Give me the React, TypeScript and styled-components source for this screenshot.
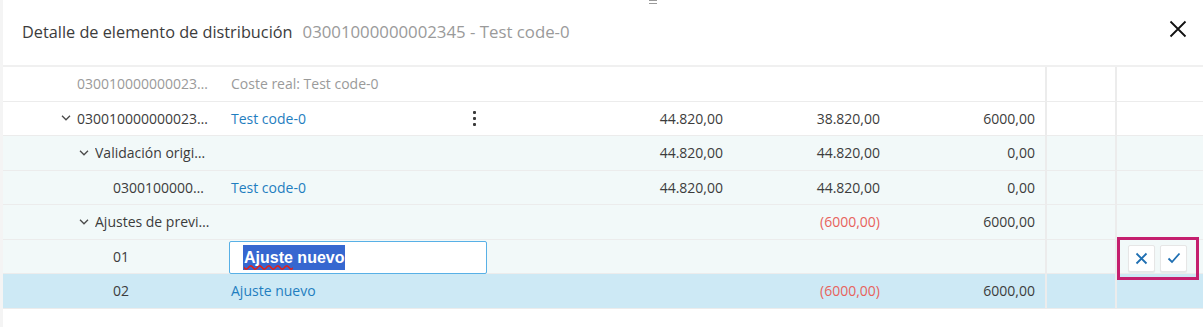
import React from "react";
import styled, { createGlobalStyle } from "styled-components";

const GlobalStyle = createGlobalStyle`
  html, body { margin: 0; padding: 0; background: #ffffff; }
  body { font-family: "Open Sans", "Noto Sans", sans-serif; color: #3c3c3c; }
  * { box-sizing: border-box; }
`;

const Page = styled.div`
  position: relative;
  width: 1203px;
  height: 327px;
  overflow: hidden;
  border-left: 3px solid #f4f4f4;
  background: #ffffff;
`;

const Handle = styled.div`
  position: absolute;
  top: 0;
  left: 646px;
  width: 8px;
  display: flex;
  flex-direction: column;
  gap: 2px;
  span {
    display: block;
    height: 1px;
    background: #9a9a9a;
  }
`;

const Header = styled.div`
  display: flex;
  align-items: center;
  height: 67px;
  padding: 0 19px 2px 19px;
  border-bottom: 2px solid #f0f0f0;
`;

const Title = styled.span`
  font-size: 16.3px;
  color: #3c3c3c;
  white-space: nowrap;
`;

const Subtitle = styled.span`
  font-size: 16.8px;
  color: #9a9a9a;
  margin-left: 10px;
  white-space: nowrap;
`;

const CloseButton = styled.button`
  margin-left: auto;
  margin-top: -6px;
  margin-right: -4px;
  border: none;
  background: transparent;
  padding: 0;
  width: 20px;
  height: 20px;
  display: flex;
  align-items: center;
  justify-content: center;
`;

const Table = styled.div`
  display: flex;
  flex-direction: column;
`;

type Variant = "plain" | "group" | "selected";

const rowBg: Record<Variant, string> = {
  plain: "#ffffff",
  group: "#f2f9f9",
  selected: "#cde9f5",
};

const Row = styled.div<{ $variant: Variant }>`
  display: grid;
  grid-template-columns: 212px 275px 245px 156px 154px 72px 84px;
  height: 34.5px;
  border-bottom: 1px solid #ececec;
  background: ${(p) => rowBg[p.$variant]};
  font-size: 14px;
`;

const TreeCell = styled.div<{ $level: number; $muted?: boolean }>`
  display: flex;
  align-items: center;
  min-width: 0;
  padding-left: ${(p) => 57 + p.$level * 18}px;
  padding-right: ${(p) => 3 + p.$level * 2}px;
  color: ${(p) => (p.$muted ? "#9a9a9a" : "#3c3c3c")};
`;

const ChevronSlot = styled.span`
  flex: 0 0 17px;
  display: flex;
  align-items: center;
  padding-left: 1px;
`;

const Truncate = styled.span`
  overflow: hidden;
  white-space: nowrap;
  text-overflow: ellipsis;
  min-width: 0;
`;

const NameCell = styled.div<{ $tone?: "link" | "muted" }>`
  display: flex;
  align-items: center;
  padding-left: 16px;
  padding-right: 14px;
  color: ${(p) => (p.$tone === "muted" ? "#9a9a9a" : "#1f7ec0")};
  white-space: nowrap;
`;

const Kebab = styled.span`
  margin-left: auto;
  display: flex;
  flex-direction: column;
  gap: 3px;
  span {
    width: 3px;
    height: 3px;
    background: #3a3a3a;
    border-radius: 1px;
  }
`;

const NumCell = styled.div<{ $negative?: boolean; $pad: number }>`
  display: flex;
  align-items: center;
  justify-content: flex-end;
  padding-right: ${(p) => p.$pad}px;
  color: ${(p) => (p.$negative ? "#e8625c" : "#3c3c3c")};
  white-space: nowrap;
`;

const DividerCell = styled.div`
  border-left: 2px solid #ececec;
  border-right: 2px solid #ececec;
`;

const ActionCell = styled.div`
  position: relative;
`;

const InputCell = styled.div`
  display: flex;
  align-items: center;
  padding-left: 14px;
  padding-right: 3px;
`;

const FakeInput = styled.div`
  width: 258px;
  height: 33px;
  border: 1px solid #58b0e6;
  border-radius: 2px;
  background: #ffffff;
  display: flex;
  align-items: center;
  padding-left: 13px;
  margin-top: 1px;
`;

const Selected = styled.span`
  font-family: "Liberation Sans", Arial, sans-serif;
  font-weight: bold;
  font-size: 16px;
  line-height: 25px;
  color: #ffffff;
  background: #3667d0;
  padding: 0 1px;
`;

const Misspelled = styled.span`
  text-decoration: underline wavy #e0201c;
  text-decoration-skip-ink: none;
  text-underline-offset: 2px;
`;

const ActionBox = styled.div`
  position: absolute;
  left: 0;
  top: -3px;
  width: 82px;
  height: 43px;
  border: 3px solid #c41f6e;
  display: flex;
  align-items: center;
  gap: 5px;
  padding-left: 8px;
  background: transparent;
  z-index: 2;
`;

const IconButton = styled.button`
  width: 27px;
  height: 27px;
  padding: 0;
  border: 1px solid #e6e6e6;
  border-radius: 2px;
  background: #ffffff;
  box-shadow: 0 1px 1px rgba(0, 0, 0, 0.06);
  display: flex;
  align-items: center;
  justify-content: center;
`;

const Chevron = () => (
  <svg width="10" height="6" viewBox="0 0 10 6">
    <path d="M1 0.8 L5 4.8 L9 0.8" fill="none" stroke="#4a4a4a" strokeWidth="1.3" />
  </svg>
);

const CloseIcon = () => (
  <svg width="18" height="18" viewBox="0 0 18 18">
    <path d="M1.5 1.5 L16.5 16.5 M16.5 1.5 L1.5 16.5" stroke="#111" strokeWidth="1.8" />
  </svg>
);

const XIcon = () => (
  <svg width="13" height="13" viewBox="0 0 13 13">
    <path d="M1.5 1.5 L11.5 11.5 M11.5 1.5 L1.5 11.5" stroke="#1f6fb2" strokeWidth="1.8" />
  </svg>
);

const CheckIcon = () => (
  <svg width="14" height="12" viewBox="0 0 14 12">
    <path d="M1.5 6.5 L5 10 L12.5 1.5" fill="none" stroke="#1f6fb2" strokeWidth="1.8" />
  </svg>
);

type RowData = {
  variant: Variant;
  level: number;
  chevron?: boolean;
  code: string;
  codeMuted?: boolean;
  name?: string;
  nameTone?: "link" | "muted";
  kebab?: boolean;
  input?: boolean;
  a?: string;
  b?: string;
  bNeg?: boolean;
  c?: string;
  actions?: boolean;
};

const rows: RowData[] = [
  { variant: "plain", level: 0, code: "030010000000023456", codeMuted: true, name: "Coste real: Test code-0", nameTone: "muted" },
  { variant: "plain", level: 0, chevron: true, code: "030010000000023456", name: "Test code-0", kebab: true, a: "44.820,00", b: "38.820,00", c: "6000,00" },
  { variant: "group", level: 1, chevron: true, code: "Validación original", a: "44.820,00", b: "44.820,00", c: "0,00" },
  { variant: "group", level: 2, code: "03001000000023", name: "Test code-0", a: "44.820,00", b: "44.820,00", c: "0,00" },
  { variant: "group", level: 1, chevron: true, code: "Ajustes de previsión", b: "(6000,00)", bNeg: true, c: "6000,00" },
  { variant: "group", level: 2, code: "01", input: true, actions: true },
  { variant: "selected", level: 2, code: "02", name: "Ajuste nuevo", b: "(6000,00)", bNeg: true, c: "6000,00" },
];

export default function App() {
  return (
    <>
      <GlobalStyle />
      <Page>
        <Handle>
          <span />
          <span />
        </Handle>
        <Header>
          <Title>Detalle de elemento de distribución</Title>
          <Subtitle>03001000000002345 - Test code-0</Subtitle>
          <CloseButton aria-label="Cerrar">
            <CloseIcon />
          </CloseButton>
        </Header>
        <Table>
          {rows.map((r, i) => (
            <Row key={i} $variant={r.variant}>
              <TreeCell $level={r.level} $muted={r.codeMuted}>
                <ChevronSlot>{r.chevron ? <Chevron /> : null}</ChevronSlot>
                <Truncate>{r.code}</Truncate>
              </TreeCell>
              {r.input ? (
                <InputCell>
                  <FakeInput>
                    <Selected>
                      <Misspelled>Ajuste</Misspelled> nuevo
                    </Selected>
                  </FakeInput>
                </InputCell>
              ) : (
                <NameCell $tone={r.nameTone}>
                  {r.name}
                  {r.kebab ? (
                    <Kebab>
                      <span />
                      <span />
                      <span />
                    </Kebab>
                  ) : null}
                </NameCell>
              )}
              <NumCell $pad={12}>{r.a}</NumCell>
              <NumCell $pad={11} $negative={r.bNeg}>{r.b}</NumCell>
              <NumCell $pad={10}>{r.c}</NumCell>
              <DividerCell />
              <ActionCell>
                {r.actions ? (
                  <ActionBox>
                    <IconButton aria-label="Cancelar">
                      <XIcon />
                    </IconButton>
                    <IconButton aria-label="Aceptar">
                      <CheckIcon />
                    </IconButton>
                  </ActionBox>
                ) : null}
              </ActionCell>
            </Row>
          ))}
        </Table>
      </Page>
    </>
  );
}
